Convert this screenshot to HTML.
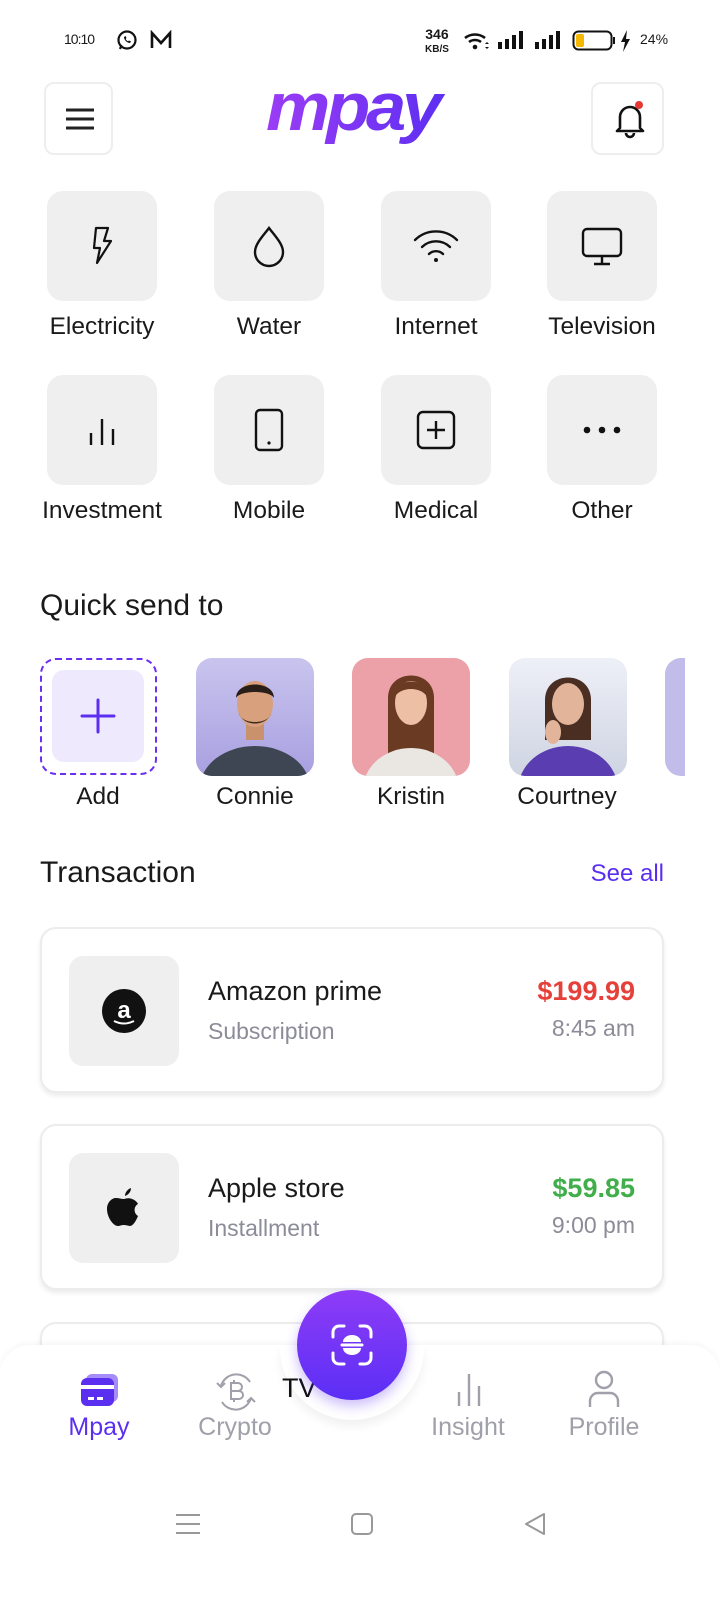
<!DOCTYPE html>
<html><head><meta charset="utf-8"><style>
*{margin:0;padding:0;box-sizing:border-box}
body{width:720px;height:1604px;background:#fff;font-family:"Liberation Sans",sans-serif;color:#1a1a1a;position:relative;overflow:hidden}
.abs{position:absolute}
.btn{position:absolute;border:2px solid #eeeeee;border-radius:10px;background:#fff}
.tile{position:absolute;width:110px;height:110px;background:#efefef;border-radius:16px;display:flex;align-items:center;justify-content:center}
.lbl{position:absolute;width:170px;text-align:center;font-size:24.5px;color:#1a1a1a}
.av{position:absolute;top:658px;width:118px;height:118px;border-radius:16px;overflow:hidden}
.nm{position:absolute;top:783px;width:160px;text-align:center;font-size:24.5px}
.card{position:absolute;left:40px;width:624px;height:166px;border:2px solid #ececec;border-radius:16px;background:#fff;box-shadow:0 3px 5px rgba(0,0,0,.08)}
.ib{position:absolute;left:27px;top:27px;width:110px;height:110px;background:#efefef;border-radius:14px;display:flex;align-items:center;justify-content:center}
.t1{position:absolute;left:166px;top:47px;font-size:27px}
.t2{position:absolute;left:166px;top:89px;font-size:23px;color:#8c8c99}
.a1{position:absolute;right:27px;top:47px;font-size:27px;font-weight:bold}
.a2{position:absolute;right:27px;top:86px;font-size:23px;color:#8c8c99}
.nl{position:absolute;top:1413px;width:140px;text-align:center;font-size:25px;color:#a0a0aa}
</style></head><body>
<!-- status -->
<div class="abs" style="left:64px;top:31px;font-size:14px;letter-spacing:-1px">10:10</div>
<svg class="abs" style="left:116px;top:29px" width="22" height="22" viewBox="0 0 22 22"><circle cx="11" cy="11" r="8.5" fill="none" stroke="#111" stroke-width="2.2"/><path d="M4 20l1.5-4" stroke="#111" stroke-width="2.2"/><path d="M8 8c0 3 3 6 6 6l1-1.5-2-1-1 .8c-1-.5-2-1.5-2.3-2.3l.8-1-1-2z" fill="#111"/></svg>
<svg class="abs" style="left:150px;top:30px" width="22" height="20" viewBox="0 0 22 20"><path d="M2 18V3l9 10 9-10v15" fill="none" stroke="#111" stroke-width="2.6"/></svg>
<div class="abs" style="left:425px;top:28px;font-size:14px;font-weight:bold;line-height:13px;text-align:center">346<br><span style="font-size:10px">KB/S</span></div>
<svg class="abs" style="left:463px;top:30px" width="28" height="22" viewBox="0 0 28 22"><path d="M2 8a16 16 0 0 1 20 0" stroke="#111" stroke-width="2.6" fill="none"/><path d="M6 12a10 10 0 0 1 12 0" stroke="#111" stroke-width="2.6" fill="none"/><circle cx="12" cy="17" r="2.3" fill="#111"/><path d="M24 12l2 2h-4zM24 19l2-2h-4z" fill="#111"/></svg>
<svg class="abs" style="left:497px;top:30px" width="70" height="20" viewBox="0 0 70 20"><g fill="#111"><rect x="1" y="12" width="4" height="7"/><rect x="8" y="9" width="4" height="10"/><rect x="15" y="5" width="4" height="14"/><rect x="22" y="1" width="4" height="18"/><rect x="38" y="12" width="4" height="7"/><rect x="45" y="9" width="4" height="10"/><rect x="52" y="5" width="4" height="14"/><rect x="59" y="1" width="4" height="18"/></g></svg>
<svg class="abs" style="left:572px;top:29px" width="70" height="24" viewBox="0 0 70 24"><rect x="1.5" y="2.5" width="38" height="18" rx="5" fill="none" stroke="#111" stroke-width="2"/><rect x="4" y="5" width="8" height="13" rx="2" fill="#f5b800"/><rect x="41" y="8" width="2" height="7" fill="#111"/><path d="M55 1l-6 12h4l-2 10 7-13h-4z" fill="#111"/></svg>
<div class="abs" style="left:640px;top:31px;font-size:14px">24%</div>
<!-- header -->
<div class="btn" style="left:44px;top:82px;width:69px;height:73px"><svg class="abs" style="left:19px;top:24px" width="30" height="22"><g stroke="#222" stroke-width="3"><line x1="1" y1="2" x2="29" y2="2"/><line x1="1" y1="11" x2="29" y2="11"/><line x1="1" y1="20" x2="29" y2="20"/></g></svg></div>
<svg class="abs" style="left:262px;top:80px" width="185" height="70" viewBox="0 0 185 70"><defs><linearGradient id="lg" x1="0" x2="1"><stop offset="0" stop-color="#9b3cf5"/><stop offset="1" stop-color="#5d2ff2"/></linearGradient></defs><text x="4" y="50" font-family="Liberation Sans" font-weight="bold" font-style="italic" font-size="68" fill="url(#lg)" letter-spacing="-4" textLength="172" lengthAdjust="spacingAndGlyphs">mpay</text></svg>
<div class="btn" style="left:591px;top:82px;width:73px;height:73px"><svg class="abs" style="left:19px;top:15px" width="36" height="40" viewBox="0 0 36 40"><path d="M8 29V18a10 10 0 0 1 20 0v11l3 3H5z" fill="none" stroke="#111" stroke-width="2.6" stroke-linejoin="round"/><path d="M14 34a4 4 0 0 0 8 0" fill="none" stroke="#111" stroke-width="2.6"/><circle cx="27" cy="6" r="4" fill="#e53935"/></svg></div>
<!-- grid -->
<div class="tile" style="left:47px;top:191px"><svg width="30" height="40" viewBox="0 0 30 40"><path d="M9 2h12l-4 13h7L10 37l3-15H7z" fill="none" stroke="#111" stroke-width="2.2" stroke-linejoin="round"/></svg></div>
<div class="tile" style="left:214px;top:191px"><svg width="40" height="44" viewBox="0 0 40 44"><path d="M20 4C14 12 6 20 6 28a14 14 0 0 0 28 0C34 20 26 12 20 4z" fill="none" stroke="#111" stroke-width="2.4"/></svg></div>
<div class="tile" style="left:381px;top:191px"><svg width="48" height="40" viewBox="0 0 48 40"><g fill="none" stroke="#111" stroke-width="2.4" stroke-linecap="round"><path d="M3 14a30 30 0 0 1 42 0"/><path d="M10 21a20 20 0 0 1 28 0"/><path d="M17 28a10 10 0 0 1 14 0"/></g><circle cx="24" cy="34" r="2" fill="#111"/></svg></div>
<div class="tile" style="left:547px;top:191px"><svg width="48" height="44" viewBox="0 0 48 44"><rect x="5" y="5" width="38" height="27" rx="4" fill="none" stroke="#111" stroke-width="2.4"/><path d="M24 32v8M16 40h16" stroke="#111" stroke-width="2.4"/></svg></div>
<div class="lbl" style="left:17px;top:313px">Electricity</div>
<div class="lbl" style="left:184px;top:313px">Water</div>
<div class="lbl" style="left:351px;top:313px">Internet</div>
<div class="lbl" style="left:517px;top:313px">Television</div>
<div class="tile" style="left:47px;top:375px"><svg width="34" height="34" viewBox="0 0 34 34"><path d="M6 32V20M17 32V6M28 32V16" stroke="#111" stroke-width="2.4"/></svg></div>
<div class="tile" style="left:214px;top:375px"><svg width="34" height="46" viewBox="0 0 34 46"><rect x="4" y="3" width="26" height="40" rx="4" fill="none" stroke="#111" stroke-width="2.4"/><circle cx="17" cy="36" r="1.6" fill="#111"/></svg></div>
<div class="tile" style="left:381px;top:375px"><svg width="42" height="42" viewBox="0 0 42 42"><rect x="3" y="3" width="36" height="36" rx="5" fill="none" stroke="#111" stroke-width="2.4"/><path d="M21 12v18M12 21h18" stroke="#111" stroke-width="2.4"/></svg></div>
<div class="tile" style="left:547px;top:375px"><svg width="40" height="10"><circle cx="5" cy="5" r="3.3" fill="#111"/><circle cx="20" cy="5" r="3.3" fill="#111"/><circle cx="35" cy="5" r="3.3" fill="#111"/></svg></div>
<div class="lbl" style="left:17px;top:497px">Investment</div>
<div class="lbl" style="left:184px;top:497px">Mobile</div>
<div class="lbl" style="left:351px;top:497px">Medical</div>
<div class="lbl" style="left:517px;top:497px">Other</div>
<!-- quick send -->
<div class="abs" style="left:40px;top:589px;font-size:30px">Quick send to</div>
<div class="abs" style="left:40px;top:658px;width:117px;height:117px;border:2.5px dashed #6a2ff0;border-radius:16px"></div>
<div class="abs" style="left:52px;top:670px;width:92px;height:92px;background:#efe9fe;border-radius:12px;display:flex;align-items:center;justify-content:center"><svg width="36" height="36"><path d="M18 2v32M2 18h32" stroke="#5b2ff0" stroke-width="3" stroke-linecap="round"/></svg></div>
<div class="av" style="left:196px;background:linear-gradient(#c9c4ee,#a9a0e0)"><svg width="118" height="118"><ellipse cx="59" cy="130" rx="55" ry="42" fill="#3e4653"/><rect x="50" y="62" width="18" height="20" fill="#c9916c"/><ellipse cx="59" cy="46" rx="18" ry="23" fill="#d8a07c"/><path d="M40 40c0-18 38-18 38 0c-4-8-34-8-38 0z" fill="#2a1e18"/><path d="M43 55c4 14 28 14 32 0c-2 12-30 12-32 0z" fill="#3a2a20"/></svg></div>
<div class="av" style="left:352px;background:#eca0a7"><svg width="118" height="118"><path d="M36 40c0-30 46-30 46 0v70H36z" fill="#6b3a22"/><ellipse cx="59" cy="132" rx="48" ry="42" fill="#eae6e2"/><ellipse cx="59" cy="45" rx="16" ry="22" fill="#edc0a6"/><path d="M42 40c2-22 32-22 34 0c-6-12-28-12-34 0z" fill="#6b3a22"/></svg></div>
<div class="av" style="left:509px;background:linear-gradient(#eef0f8,#cfd4e2)"><svg width="118" height="118"><path d="M36 42c0-30 46-30 46 0v40H36z" fill="#4a2e22"/><ellipse cx="59" cy="132" rx="50" ry="44" fill="#5a3db0"/><ellipse cx="59" cy="46" rx="16" ry="21" fill="#e2b59a"/><ellipse cx="44" cy="74" rx="8" ry="12" fill="#e2b59a"/></svg></div>
<div class="av" style="left:665px;width:20px;border-radius:16px 0 0 16px;background:#c1bcea"></div>
<div class="nm" style="left:18px">Add</div>
<div class="nm" style="left:175px">Connie</div>
<div class="nm" style="left:331px">Kristin</div>
<div class="nm" style="left:487px">Courtney</div>
<!-- transaction -->
<div class="abs" style="left:40px;top:856px;font-size:30px">Transaction</div>
<div class="abs" style="right:56px;top:860px;font-size:24px;color:#5b2ff0">See all</div>
<div class="card" style="top:927px"><div class="ib"><svg width="46" height="46" viewBox="0 0 46 46"><circle cx="23" cy="23" r="22" fill="#111"/><text x="23" y="30" text-anchor="middle" font-family="Liberation Sans" font-weight="bold" font-size="24" fill="#fff">a</text><path d="M13 33q10 5 20 0" stroke="#fff" stroke-width="2" fill="none"/></svg></div>
<div class="t1">Amazon prime</div><div class="t2">Subscription</div><div class="a1" style="color:#e5403a">$199.99</div><div class="a2">8:45 am</div></div>
<div class="card" style="top:1124px"><div class="ib"><svg width="40" height="46" viewBox="0 0 40 46"><path d="M20 14c3-1 6-1 8 0 3 1 5 3 6 5-4 2-5 9 0 12-2 5-5 10-8 10-2 0-3-1-6-1s-4 1-6 1C9 41 3 32 3 24c0-7 5-11 9-11 3 0 5 1 8 1z" fill="#111"/><path d="M21 11c0-4 3-7 6-8 0 4-3 7-6 8z" fill="#111"/></svg></div>
<div class="t1">Apple store</div><div class="t2">Installment</div><div class="a1" style="color:#3fae4b">$59.85</div><div class="a2">9:00 pm</div></div>
<div class="card" style="top:1322px;height:120px"></div>
<!-- bottom nav -->
<div class="abs" style="left:0;top:1345px;width:720px;height:259px;background:#fff;border-radius:30px 30px 0 0;box-shadow:0 -2px 6px rgba(0,0,0,.04)"></div>
<div class="abs" style="left:280px;top:1345px;width:144px;height:75px;background:#fff;border-radius:0 0 72px 72px;box-shadow:0 6px 10px rgba(0,0,0,.06)"></div>
<div class="abs" style="left:282px;top:1373px;width:80px;height:30px;overflow:hidden;font-size:27px;color:#111">TV shop</div>
<div class="abs" style="left:297px;top:1290px;width:110px;height:110px;border-radius:55px;background:linear-gradient(#8e3cf7,#5b2ff5);box-shadow:0 6px 12px rgba(90,40,240,.3);display:flex;align-items:center;justify-content:center"><svg width="44" height="44" viewBox="0 0 44 44"><g fill="none" stroke="#fff" stroke-width="3" stroke-linecap="round"><path d="M3 14V9a6 6 0 0 1 6-6h5M30 3h5a6 6 0 0 1 6 6v5M41 30v5a6 6 0 0 1-6 6h-5M14 41H9a6 6 0 0 1-6-6v-5"/><path d="M12 22h20"/></g><path d="M13 19a9 7 0 0 1 18 0zM13 25h18a9 7 0 0 1-18 0z" fill="#fff"/></svg></div>
<svg class="abs" style="left:80px;top:1372px" width="40" height="36" viewBox="0 0 40 36"><rect x="6" y="2" width="32" height="28" rx="6" fill="#a68cf8"/><rect x="1" y="6" width="33" height="28" rx="6" fill="#5b2ff0"/><rect x="1" y="13" width="33" height="4" fill="#fff"/><rect x="8" y="25" width="6" height="3" fill="#fff"/><rect x="17" y="25" width="6" height="3" fill="#fff"/></svg>
<svg class="abs" style="left:213px;top:1369px" width="46" height="46" viewBox="0 0 46 46"><g fill="none" stroke="#a0a0aa" stroke-width="2"><path d="M8 17a16 16 0 0 1 29-4M38 29a16 16 0 0 1-29 4"/><path d="M4 14l4 4 4-4M34 33l4-4 4 4"/><path d="M18 14h7a4 4 0 0 1 0 8h-7zM18 22h8a4 4 0 0 1 0 8h-8zM18 14v16M21 11v3M21 30v3"/></g></svg>
<svg class="abs" style="left:455px;top:1372px" width="28" height="36"><path d="M4 34V20M14 34V2M24 34V14" stroke="#a0a0aa" stroke-width="2.4"/></svg>
<svg class="abs" style="left:586px;top:1370px" width="36" height="38" viewBox="0 0 36 38"><circle cx="18" cy="10" r="8" fill="none" stroke="#a0a0aa" stroke-width="2.4"/><path d="M4 37v-6a8 8 0 0 1 8-8h12a8 8 0 0 1 8 8v6" fill="none" stroke="#a0a0aa" stroke-width="2.4"/></svg>
<div class="nl" style="left:29px;color:#5b2ff0">Mpay</div>
<div class="nl" style="left:165px">Crypto</div>
<div class="nl" style="left:398px">Insight</div>
<div class="nl" style="left:534px">Profile</div>
<!-- gesture bar -->
<svg class="abs" style="left:175px;top:1512px" width="26" height="24"><path d="M1 3h24M1 12h24M1 21h24" stroke="#999" stroke-width="2"/></svg>
<div class="abs" style="left:351px;top:1513px;width:22px;height:22px;border:2px solid #999;border-radius:5px"></div>
<svg class="abs" style="left:522px;top:1511px" width="26" height="26"><path d="M22 3L4 13l18 10z" fill="none" stroke="#999" stroke-width="2" stroke-linejoin="round"/></svg>
</body></html>
